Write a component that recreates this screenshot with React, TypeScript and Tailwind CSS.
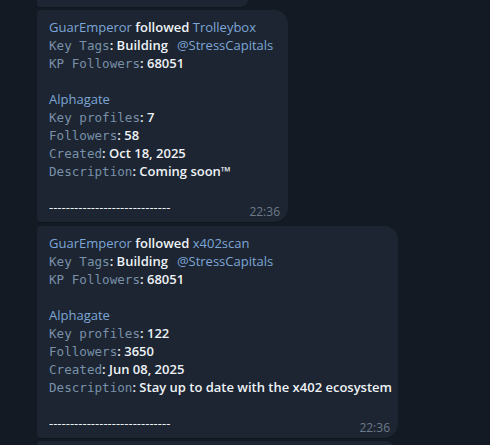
import React from 'react';

type Post = {
  target: string;
  keyProfiles: string;
  followers: string;
  created: string;
  description: string;
  width: string;
};

const POSTS: Post[] = [
  {
    target: 'Trolleybox',
    keyProfiles: '7',
    followers: '58',
    created: 'Oct 18, 2025',
    description: 'Coming soon™',
    width: 'w-[251px]',
  },
  {
    target: 'x402scan',
    keyProfiles: '122',
    followers: '3650',
    created: 'Jun 08, 2025',
    description: 'Stay up to date with the x402 ecosystem',
    width: 'w-[361px]',
  },
];

function Label({ children }: { children: React.ReactNode }) {
  return (
    <span className="font-['DejaVu_Sans_Mono',monospace] text-[12.6px] text-[#7a90a9]">{children}</span>
  );
}

// each text line is pinned to 18px so the mono/sans mix doesn't grow the line box
function Line({ children }: { children?: React.ReactNode }) {
  return <div className="h-[18px] whitespace-nowrap">{children}</div>;
}

function Row({ label, value }: { label: string; value: React.ReactNode }) {
  return (
    <Line>
      <Label>{label}</Label>
      <span className="font-semibold text-[#eef2f6]">: {value}</span>
    </Line>
  );
}

function Bubble({ post }: { post: Post }) {
  return (
    <div
      className={`relative ${post.width} rounded-tl-[4px] rounded-bl-[4px] rounded-r-[14px] bg-[#1c2531] pl-3 pt-2 pb-[6px] text-[13px] leading-[18px] shadow-[0_1px_0_#10161e]`}
    >
      <Line>
        <span className="text-[#7ea6d6]">GuarEmperor</span>{' '}
        <span className="font-semibold text-[#eef2f6]">followed</span>{' '}
        <span className="text-[#7ea6d6]">{post.target}</span>
      </Line>
      <Line>
        <Label>Key Tags</Label>
        <span className="font-semibold text-[#eef2f6]">: Building</span>
        <span className="ml-[9px] text-[#7ea6d6]">@StressCapitals</span>
      </Line>
      <Row label="KP Followers" value="68051" />
      <Line />
      <Line>
        <span className="text-[#7ea6d6]">Alphagate</span>
      </Line>
      <Row label="Key profiles" value={post.keyProfiles} />
      <Row label="Followers" value={post.followers} />
      <Row label="Created" value={post.created} />
      <Row label="Description" value={post.description} />
      <Line />
      <Line>
        <span className="text-[#eef2f6]">-----------------------------</span>
      </Line>
      <span className="absolute right-[8px] bottom-[3px] text-[12px] leading-[14px] text-[#6c7a89]">
        22:36
      </span>
    </div>
  );
}

export default function App() {
  return (
    <div className="h-[445px] w-[490px] overflow-hidden bg-[#131a24] font-['Open_Sans',sans-serif]">
      <div className="flex flex-col pl-[37px]">
        <div className="h-[7px] w-[211px] rounded-bl-[4px] rounded-br-[14px] bg-[#1c2531] shadow-[0_1px_0_#10161e]" />
        <div className="mt-[3px] flex flex-col gap-[4px]">
          {POSTS.map((p) => (
            <Bubble key={p.target} post={p} />
          ))}
        </div>
        <div className="mt-[3px] h-[20px] w-[361px] rounded-tl-[4px] rounded-tr-[14px] bg-[#1c2531]" />
      </div>
    </div>
  );
}
